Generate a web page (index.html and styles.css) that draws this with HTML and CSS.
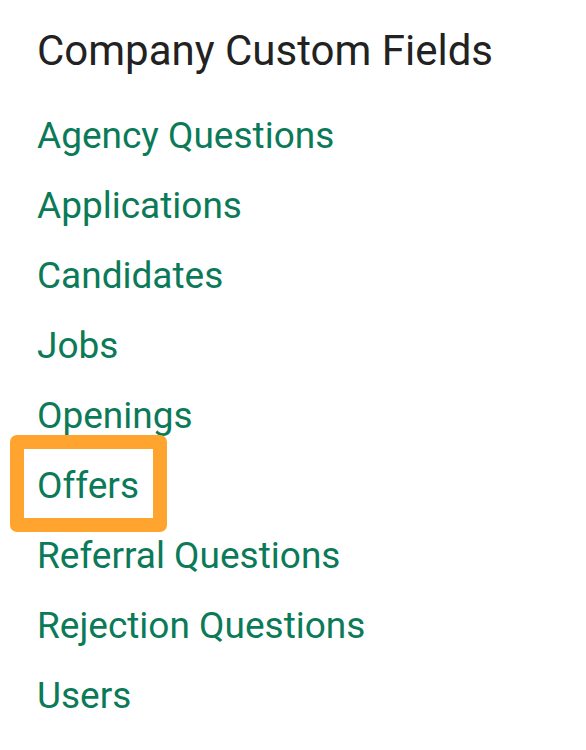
FILE: index.html
```html
<!DOCTYPE html>
<html lang="en">
<head>
    <meta charset="UTF-8">
    <meta name="viewport" content="width=device-width, initial-scale=1.0">
    <title>Company Custom Fields</title>
    <link rel="stylesheet" href="styles.css">
</head>
<body>
    <div class="container">
        <h1>Company Custom Fields</h1>
        <ul class="field-list">
            <li><a href="#">Agency Questions</a></li>
            <li><a href="#">Applications</a></li>
            <li><a href="#">Candidates</a></li>
            <li><a href="#">Jobs</a></li>
            <li><a href="#">Openings</a></li>
            <li class="highlight"><a href="#">Offers</a></li>
            <li><a href="#">Referral Questions</a></li>
            <li><a href="#">Rejection Questions</a></li>
            <li><a href="#">Users</a></li>
        </ul>
    </div>
</body>
</html>
```

FILE: styles.css
```css
body {
    font-family: Roboto, "Liberation Sans", sans-serif;
    margin: 0;
    background-color: #ffffff;
}
.container {
    padding: 16px 0 0 37px;
}
h1 {
    margin: 0;
    font-size: 42px;
    font-weight: 400;
    line-height: 70px;
    color: #222222;
}
.field-list {
    list-style: none;
    margin: 15px 0 0;
    padding: 0;
}
.field-list li {
    font-size: 37px;
    line-height: 70px;
    position: relative;
}
.field-list a {
    color: #0b7a58;
    text-decoration: none;
}
.highlight::before {
    content: "";
    position: absolute;
    left: -27px;
    top: -16px;
    width: 129px;
    height: 69px;
    border: 14px solid #ffa52f;
    border-radius: 7px;
}
```
